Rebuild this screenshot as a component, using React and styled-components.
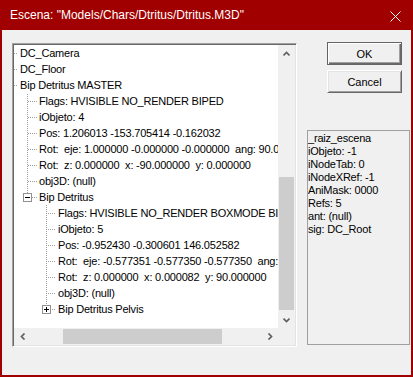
import React from 'react';
import styled, { createGlobalStyle } from 'styled-components';

const RED = '#a00000';
const FACE = '#f0f0f0';
const UI_FONT = `"Liberation Sans", Arial, sans-serif`;

const GlobalStyle = createGlobalStyle`
    html, body {
        margin: 0;
        padding: 0;
        background: ${RED};
    }
`;

const Window = styled.div`
    width: 413px;
    height: 377px;
    box-sizing: border-box;
    background: ${RED};
    padding: 0 2px 2px 2px;
    display: flex;
    flex-direction: column;
    font-family: ${UI_FONT};
    overflow: hidden;
`;

const TitleBar = styled.div`
    height: 30px;
    flex: 0 0 30px;
    display: flex;
    align-items: center;
    justify-content: space-between;
    padding: 0 10px 0 8px;
    color: white;
    font-size: 12px;
    white-space: pre;
`;

const CloseIcon = styled.svg`
    margin-top: 2px;
`;

const Body = styled.div`
    flex: 1;
    background: ${FACE};
    display: flex;
    align-items: flex-start;
    padding: 12px 0 0 10px;
`;

const TreeFrame = styled.div`
    margin-top: 1px;
    width: 285px;
    height: 304px;
    box-sizing: border-box;
    border: 1px solid;
    border-color: #a0a0a0 #ffffff #ffffff #a0a0a0;
    padding: 1px;
    box-shadow: inset 1px 1px #696969, inset -1px -1px #e3e3e3;
    display: grid;
    grid-template-columns: 1fr 17px;
    grid-template-rows: 1fr 17px;
    background: white;
`;

const TreeContent = styled.div`
    overflow: hidden;
    background: white;
    font-size: 11px;
    letter-spacing: -0.2px;
    color: #000;
`;

const Row = styled.div`
    height: 16px;
    display: flex;
    align-items: center;
    white-space: pre;
`;

const Guide = styled.svg`
    flex: 0 0 auto;
    display: block;
`;

const VScroll = styled.div`
    background: ${FACE};
    display: flex;
    flex-direction: column;
`;

const HScroll = styled.div`
    background: ${FACE};
    display: flex;
`;

const Corner = styled.div`
    background: ${FACE};
`;

const ArrowCell = styled.div`
    flex: 0 0 17px;
    width: 17px;
    height: 17px;
    display: flex;
    align-items: center;
    justify-content: center;
`;

const VTrack = styled.div`
    flex: 1;
    display: flex;
    flex-direction: column;
    padding: 0 1px;
`;

const VThumb = styled.div`
    margin-top: ${p => p.$offset}px;
    height: ${p => p.$size}px;
    background: #cdcdcd;
`;

const HTrack = styled.div`
    flex: 1;
    display: flex;
    padding: 1px 0;
`;

const HThumb = styled.div`
    margin-left: ${p => p.$offset}px;
    width: ${p => p.$size}px;
    background: #cdcdcd;
`;

const Side = styled.div`
    margin-left: 10px;
    width: 103px;
    display: flex;
    flex-direction: column;
`;

const Button = styled.button`
    margin-left: 20px;
    width: 75px;
    height: 23px;
    padding: 0;
    background: ${FACE};
    font-family: ${UI_FONT};
    font-size: 11px;
    color: #000;
    border: 1px solid;
    border-color: ${p => (p.$default ? '#646464' : '#ffffff #696969 #696969 #ffffff')};
    box-shadow: ${p =>
        p.$default
            ? 'inset 1px 1px #ffffff, inset -1px -1px #696969, inset -2px -2px #a0a0a0'
            : 'inset 1px 1px #e3e3e3, inset -1px -1px #a0a0a0'};
    & + & {
        margin-top: 5px;
    }
`;

const InfoBox = styled.div`
    margin-top: 37px;
    height: 215px;
    box-sizing: border-box;
    border: 1px solid #a0a0a0;
    padding: 1px 0 0 0;
    font-size: 11px;
    line-height: 13px;
    letter-spacing: -0.2px;
    color: #000;
    white-space: pre;
    overflow: hidden;
`;

const INDENT = 19;

// dotted connectors, one pixel on, one off
function dots(key, x1, y1, x2, y2) {
    const out = [];
    for (let x = x1; x <= x2; x++) {
        for (let y = y1; y <= y2; y++) {
            if ((x + y) % 2 === 0) out.push(<rect key={`${key}${x}-${y}`} x={x} y={y} width="1" height="1" />);
        }
    }
    return out;
}

function TreeGuide({ depth, last, box }) {
    const width = 6 + INDENT * depth;
    const textX = width + 2;
    const parts = [];
    if (depth === 0) {
        parts.push(...dots('s', 0, 8, 3, 8));
    } else {
        const vx = 13 + INDENT * (depth - 1);
        const bottom = last ? (box ? 3 : 8) : 15;
        parts.push(...dots('v', vx, 0, vx, bottom));
        if (!last && box) parts.push(...dots('w', vx, 13, vx, 15));
        parts.push(...dots('h', box ? vx + 5 : vx + 1, 8, textX - 5, 8));
    }
    let boxEl = null;
    if (box) {
        const vx = 13 + INDENT * (depth - 1);
        boxEl = (
            <g>
                <rect x={vx - 3.5} y={4.5} width="8" height="8" fill="white" stroke="#919191" />
                <rect x={vx - 2} y={8} width="5" height="1" fill="#000" />
                {box === 'plus' && <rect x={vx} y={6} width="1" height="5" fill="#000" />}
            </g>
        );
    }
    return (
        <Guide width={width} height="16" viewBox={`0 0 ${width} 16`}>
            <g fill="#a0a0a0">{parts}</g>
            {boxEl}
        </Guide>
    );
}

const tree = [
    { depth: 0, text: 'DC_Camera' },
    { depth: 0, text: 'DC_Floor' },
    { depth: 0, text: 'Bip Detritus MASTER' },
    { depth: 1, text: 'Flags: HVISIBLE NO_RENDER BIPED' },
    { depth: 1, text: 'iObjeto: 4' },
    { depth: 1, text: 'Pos: 1.206013 -153.705414 -0.162032' },
    { depth: 1, text: 'Rot:  eje: 1.000000 -0.000000 -0.000000  ang: 90.000000' },
    { depth: 1, text: 'Rot:  z: 0.000000  x: -90.000000  y: 0.000000' },
    { depth: 1, text: 'obj3D: (null)' },
    { depth: 1, text: 'Bip Detritus', box: 'minus', last: true },
    { depth: 2, text: 'Flags: HVISIBLE NO_RENDER BOXMODE BIPED' },
    { depth: 2, text: 'iObjeto: 5' },
    { depth: 2, text: 'Pos: -0.952430 -0.300601 146.052582' },
    { depth: 2, text: 'Rot:  eje: -0.577351 -0.577350 -0.577350  ang: 120.000000' },
    { depth: 2, text: 'Rot:  z: 0.000000  x: 0.000082  y: 90.000000' },
    { depth: 2, text: 'obj3D: (null)' },
    { depth: 2, text: 'Bip Detritus Pelvis', box: 'plus', last: true },
];

const info = [
    '_raiz_escena',
    'iObjeto: -1',
    'iNodeTab: 0',
    'iNodeXRef: -1',
    'AniMask: 0000',
    'Refs: 5',
    'ant: (null)',
    'sig: DC_Root',
];

function Chevron({ dir }) {
    const pts = {
        up: '0.5,4.5 3.5,1.5 6.5,4.5',
        down: '0.5,1.5 3.5,4.5 6.5,1.5',
        left: '4.5,0.5 1.5,3.5 4.5,6.5',
        right: '1.5,0.5 4.5,3.5 1.5,6.5',
    }[dir];
    const vertical = dir === 'up' || dir === 'down';
    return (
        <svg width={vertical ? 7 : 6} height={vertical ? 6 : 7}>
            <polyline points={pts} fill="none" stroke="#606060" strokeWidth="1.7" />
        </svg>
    );
}

export default function App() {
    return (
        <>
            <GlobalStyle />
            <Window>
                <TitleBar>
                    <span>Escena: "Models/Chars/Dtritus/Dtritus.M3D"</span>
                    <CloseIcon width="11" height="11" viewBox="0 0 11 11">
                        <path d="M0.5 0.5 L10.5 10.5 M10.5 0.5 L0.5 10.5" stroke="white" strokeWidth="1" />
                    </CloseIcon>
                </TitleBar>
                <Body>
                    <TreeFrame>
                        <TreeContent>
                            {tree.map((r, i) => (
                                <Row key={i}>
                                    <TreeGuide depth={r.depth} last={r.last} box={r.box} />
                                    <span>{r.text}</span>
                                </Row>
                            ))}
                        </TreeContent>
                        <VScroll>
                            <ArrowCell><Chevron dir="up" /></ArrowCell>
                            <VTrack>
                                <VThumb $offset={115} $size={133} />
                            </VTrack>
                            <ArrowCell><Chevron dir="down" /></ArrowCell>
                        </VScroll>
                        <HScroll>
                            <ArrowCell><Chevron dir="left" /></ArrowCell>
                            <HTrack>
                                <HThumb $offset={32} $size={159} />
                            </HTrack>
                            <ArrowCell><Chevron dir="right" /></ArrowCell>
                        </HScroll>
                        <Corner />
                    </TreeFrame>
                    <Side>
                        <Button $default>OK</Button>
                        <Button>Cancel</Button>
                        <InfoBox>{info.join('\n')}</InfoBox>
                    </Side>
                </Body>
            </Window>
        </>
    );
}
